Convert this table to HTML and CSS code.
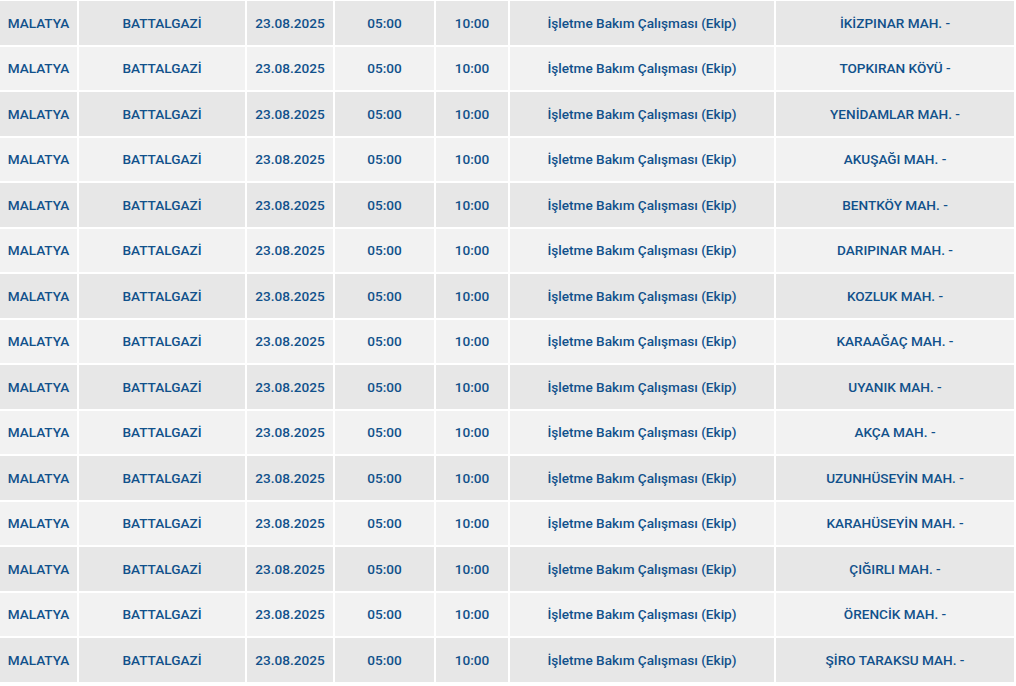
FILE: index.html
```html
<!DOCTYPE html>
<html lang="tr">
<head>
<meta charset="utf-8">
<link rel="stylesheet" href="styles.css">
</head>
<body>
<table class="outage">
<colgroup>
<col class="c1"><col class="c2"><col class="c3"><col class="c4"><col class="c5"><col class="c6"><col class="c7">
</colgroup>
<tbody>
<tr><td>MALATYA</td><td>BATTALGAZİ</td><td>23.08.2025</td><td>05:00</td><td>10:00</td><td>İşletme Bakım Çalışması (Ekip)</td><td>İKİZPINAR MAH. -</td></tr>
<tr><td>MALATYA</td><td>BATTALGAZİ</td><td>23.08.2025</td><td>05:00</td><td>10:00</td><td>İşletme Bakım Çalışması (Ekip)</td><td>TOPKIRAN KÖYÜ -</td></tr>
<tr><td>MALATYA</td><td>BATTALGAZİ</td><td>23.08.2025</td><td>05:00</td><td>10:00</td><td>İşletme Bakım Çalışması (Ekip)</td><td>YENİDAMLAR MAH. -</td></tr>
<tr><td>MALATYA</td><td>BATTALGAZİ</td><td>23.08.2025</td><td>05:00</td><td>10:00</td><td>İşletme Bakım Çalışması (Ekip)</td><td>AKUŞAĞI MAH. -</td></tr>
<tr><td>MALATYA</td><td>BATTALGAZİ</td><td>23.08.2025</td><td>05:00</td><td>10:00</td><td>İşletme Bakım Çalışması (Ekip)</td><td>BENTKÖY MAH. -</td></tr>
<tr><td>MALATYA</td><td>BATTALGAZİ</td><td>23.08.2025</td><td>05:00</td><td>10:00</td><td>İşletme Bakım Çalışması (Ekip)</td><td>DARIPINAR MAH. -</td></tr>
<tr><td>MALATYA</td><td>BATTALGAZİ</td><td>23.08.2025</td><td>05:00</td><td>10:00</td><td>İşletme Bakım Çalışması (Ekip)</td><td>KOZLUK MAH. -</td></tr>
<tr><td>MALATYA</td><td>BATTALGAZİ</td><td>23.08.2025</td><td>05:00</td><td>10:00</td><td>İşletme Bakım Çalışması (Ekip)</td><td>KARAAĞAÇ MAH. -</td></tr>
<tr><td>MALATYA</td><td>BATTALGAZİ</td><td>23.08.2025</td><td>05:00</td><td>10:00</td><td>İşletme Bakım Çalışması (Ekip)</td><td>UYANIK MAH. -</td></tr>
<tr><td>MALATYA</td><td>BATTALGAZİ</td><td>23.08.2025</td><td>05:00</td><td>10:00</td><td>İşletme Bakım Çalışması (Ekip)</td><td>AKÇA MAH. -</td></tr>
<tr><td>MALATYA</td><td>BATTALGAZİ</td><td>23.08.2025</td><td>05:00</td><td>10:00</td><td>İşletme Bakım Çalışması (Ekip)</td><td>UZUNHÜSEYİN MAH. -</td></tr>
<tr><td>MALATYA</td><td>BATTALGAZİ</td><td>23.08.2025</td><td>05:00</td><td>10:00</td><td>İşletme Bakım Çalışması (Ekip)</td><td>KARAHÜSEYİN MAH. -</td></tr>
<tr><td>MALATYA</td><td>BATTALGAZİ</td><td>23.08.2025</td><td>05:00</td><td>10:00</td><td>İşletme Bakım Çalışması (Ekip)</td><td>ÇIĞIRLI MAH. -</td></tr>
<tr><td>MALATYA</td><td>BATTALGAZİ</td><td>23.08.2025</td><td>05:00</td><td>10:00</td><td>İşletme Bakım Çalışması (Ekip)</td><td>ÖRENCİK MAH. -</td></tr>
<tr><td>MALATYA</td><td>BATTALGAZİ</td><td>23.08.2025</td><td>05:00</td><td>10:00</td><td>İşletme Bakım Çalışması (Ekip)</td><td>ŞİRO TARAKSU MAH. -</td></tr>
</tbody>
</table>
</body>
</html>
```
FILE: styles.css
```css
html, body {
  margin: 0;
  padding: 0;
  background: #ffffff;
}
.outage {
  width: 1014px;
  border-collapse: separate;
  border-spacing: 0;
  table-layout: fixed;
  font-family: Roboto, "Liberation Sans", sans-serif;
  font-size: 13.6px;
  font-weight: 500;
  color: #11518b;
}
.c1 { width: 77px; }
.c2 { width: 168px; }
.c3 { width: 88px; }
.c4 { width: 101px; }
.c5 { width: 74px; }
.c6 { width: 266px; }
.c7 { width: 240px; }
.outage td {
  height: 45.5px;
  padding: 0;
  text-align: center;
  vertical-align: middle;
  border-top: 2px solid #ffffff;
  border-left: 2px solid #ffffff;
  box-sizing: border-box;
  white-space: nowrap;
}
.outage td:first-child { border-left: 0; }
.outage tr:first-child td { border-top-width: 1px; height: 44.5px; }
.outage tr:nth-child(odd) td { background: #e7e7e7; }
.outage tr:nth-child(even) td { background: #f2f2f2; }
```
